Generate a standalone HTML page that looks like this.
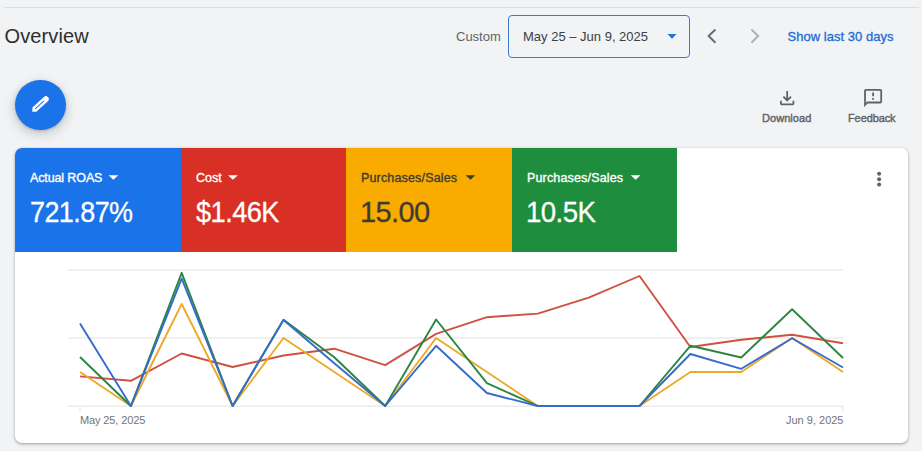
<!DOCTYPE html>
<html><head><meta charset="utf-8">
<style>
html,body{margin:0;padding:0;}
body{width:922px;height:451px;overflow:hidden;background:#f1f3f4;position:relative;font-family:"Liberation Sans",sans-serif;}
.a{position:absolute;white-space:nowrap;}
#topline{left:4px;top:7px;width:915px;height:1px;background:#dadce0;}
#title{left:4.5px;top:26px;font-size:20px;line-height:20px;color:#2d2e31;letter-spacing:0.12px;}
#custom{left:456px;top:30px;font-size:13px;line-height:13px;color:#5f6368;}
#datebox{left:508px;top:15px;width:180px;height:41px;border:1px solid #3a78d2;border-radius:4px;}
#datetxt{left:523px;top:30px;font-size:13px;line-height:13px;color:#3c4043;}
#show{left:787.5px;top:30px;font-size:13px;line-height:13px;color:#1c6bd6;-webkit-text-stroke:0.3px #1c6bd6;letter-spacing:0.03px;}
#fab{left:15.2px;top:79.6px;width:50.4px;height:50.4px;border-radius:50%;background:#1a73e8;box-shadow:0 1px 3px rgba(60,64,67,.3),0 4px 8px 3px rgba(60,64,67,.15);}
#dl{left:762px;top:113px;font-size:11px;line-height:11px;color:#5f6368;-webkit-text-stroke:0.4px #5f6368;letter-spacing:0.05px;}
#fb{left:848px;top:113px;font-size:11px;line-height:11px;color:#5f6368;-webkit-text-stroke:0.4px #5f6368;letter-spacing:-0.1px;}
#card{left:15px;top:148px;width:893px;height:295px;background:#fff;border-radius:7px;box-shadow:0 1px 2px rgba(60,64,67,.3),0 1px 3px 1px rgba(60,64,67,.15);overflow:hidden;}
.tile{position:absolute;top:0;height:104px;}
.tl{position:absolute;font-size:12.5px;line-height:12px;font-weight:400;-webkit-text-stroke:0.35px currentColor;white-space:nowrap;}
.tv{position:absolute;transform-origin:0 0;font-size:29px;line-height:29px;letter-spacing:-0.6px;white-space:nowrap;-webkit-text-stroke:0.3px currentColor;}
#xl1{letter-spacing:-0.12px;left:80px;top:415px;font-size:11px;line-height:11px;color:#70757a;}
#xl2{left:786px;top:415px;font-size:11px;line-height:11px;color:#70757a;}
svg{position:absolute;left:0;top:0;}
</style></head>
<body>
<div class="a" id="topline"></div>
<div class="a" id="title">Overview</div>
<div class="a" id="custom">Custom</div>
<div class="a" id="datebox"></div>
<div class="a" id="datetxt">May 25 – Jun 9, 2025</div>
<div class="a" id="show">Show last 30 days</div>
<div class="a" id="fab"></div>
<div class="a" id="dl">Download</div>
<div class="a" id="fb">Feedback</div>
<div class="a" id="card">
  <div class="tile" style="left:0;width:166px;background:#1a73e8;">
    <div class="tl" style="left:15px;top:23.7px;color:#fff;letter-spacing:-0.12px">Actual ROAS</div>
    <div class="tv" style="left:15px;top:50px;color:#fff;transform:scaleX(0.929)">721.87%</div>
  </div>
  <div class="tile" style="left:166px;width:165px;background:#d93025;">
    <div class="tl" style="left:15px;top:23.7px;color:#fff;letter-spacing:0px">Cost</div>
    <div class="tv" style="left:15px;top:50px;color:#fff;transform:scaleX(0.939)">$1.46K</div>
  </div>
  <div class="tile" style="left:331px;width:166px;background:#f9ab00;">
    <div class="tl" style="left:15px;top:23.7px;color:#3e3b31;letter-spacing:0.16px">Purchases/Sales</div>
    <div class="tv" style="left:14px;top:50px;color:#3e3b31">15.00</div>
  </div>
  <div class="tile" style="left:497px;width:165px;background:#1e8e3e;">
    <div class="tl" style="left:15px;top:23.7px;color:#fff;letter-spacing:0.16px">Purchases/Sales</div>
    <div class="tv" style="left:13.5px;top:50px;color:#fff;transform:scaleX(0.952)">10.5K</div>
  </div>
</div>
<div class="a" id="xl1">May 25, 2025</div>
<div class="a" id="xl2">Jun 9, 2025</div>
<svg width="922" height="451" viewBox="0 0 922 451">
<g stroke="#ebebeb" stroke-width="1.5" fill="none">
<line x1="68" y1="270.3" x2="843" y2="270.3"/>
<line x1="68" y1="338.1" x2="843" y2="338.1"/>
<line x1="68" y1="406.2" x2="843.5" y2="406.2"/>
<line x1="80" y1="406" x2="80" y2="411"/>
<line x1="843" y1="406" x2="843" y2="411"/>
</g>
<g fill="none" stroke-width="1.9" stroke-linejoin="round" stroke-linecap="butt">
<polyline points="80.0,376.4 130.9,380.8 181.7,353.5 232.6,367.0 283.5,355.5 334.3,348.7 385.2,365.1 436.1,333.9 486.9,317.2 537.8,313.6 588.7,297.6 639.5,276.0 690.4,347.0 741.3,339.8 792.1,334.8 843.0,343.2" stroke="#cf5141"/>
<polyline points="80.0,372.0 130.9,406.0 181.7,304.0 232.6,406.0 283.5,338.0 334.3,372.0 385.2,406.0 436.1,338.0 486.9,372.0 537.8,406.0 588.7,406.0 639.5,406.0 690.4,372.0 741.3,372.0 792.1,338.0 843.0,372.0" stroke="#eda928"/>
<polyline points="80.0,357.0 130.9,406.0 181.7,272.8 232.6,406.0 283.5,319.7 334.3,357.3 385.2,406.0 436.1,319.5 486.9,383.1 537.8,406.0 588.7,406.0 639.5,406.0 690.4,345.8 741.3,357.5 792.1,309.2 843.0,358.0" stroke="#2b8543"/>
<polyline points="80.0,323.5 130.9,406.0 181.7,278.6 232.6,406.0 283.5,320.0 334.3,363.2 385.2,406.0 436.1,345.8 486.9,393.0 537.8,406.0 588.7,406.0 639.5,406.0 690.4,354.0 741.3,368.8 792.1,338.2 843.0,367.5" stroke="#356ccb"/>
</g>
<!-- date dropdown triangle -->
<path d="M667.5 34h9l-4.5 4.8z" fill="#1a73e8"/>
<!-- chevrons -->
<polyline points="715.4,29.5 708.6,36 715.4,42.7" fill="none" stroke="#66696d" stroke-width="1.9"/>
<polyline points="751.4,29.5 758.2,36 751.4,42.7" fill="none" stroke="#adb0b3" stroke-width="1.9"/>
<!-- tile triangles -->
<path d="M108.5 175.3h9.8l-4.9 4.5z" fill="#fff"/>
<path d="M228 175.3h9.8l-4.9 4.5z" fill="#fff"/>
<path d="M465.6 175.3h9.8l-4.9 4.5z" fill="#3e3b31"/>
<path d="M630.7 175.3h9.8l-4.9 4.5z" fill="#fff"/>
<!-- more vert -->
<g fill="#5f6368"><circle cx="879.1" cy="173.8" r="2"/><circle cx="879.1" cy="179.2" r="2"/><circle cx="879.1" cy="184.6" r="2"/></g>
<!-- pencil -->
<g transform="translate(32.2 111.5) rotate(-42)">
<path d="M0 0.2 L2.9 -2.9 H18.4 a2.9 2.9 0 0 1 0 5.8 H2.9 Z" fill="#fff"/>
<line x1="4" y1="0" x2="15.8" y2="0" stroke="#1a73e8" stroke-width="1"/>
</g>
<!-- download -->
<path transform="translate(776.5 87.5) scale(0.89)" fill="#5f6368" d="M18 15v3H6v-3H4v3c0 1.1.9 2 2 2h12c1.1 0 2-.9 2-2v-3h-2zm-1-4l-1.41-1.41L13 12.17V4h-2v8.17L8.41 9.59 7 11l5 5 5-5z"/>
<!-- feedback -->
<path transform="translate(862.3 87.2) scale(0.9)" fill="#5f6368" d="M20 2H4c-1.1 0-1.99.9-1.99 2L2 22l4-4h14c1.1 0 2-.9 2-2V4c0-1.1-.9-2-2-2zm0 14H5.170l-.59.59-.58.58V4h16v12zm-9-4h2v2h-2zm0-6h2v4h-2z"/>
</svg>
</body></html>
